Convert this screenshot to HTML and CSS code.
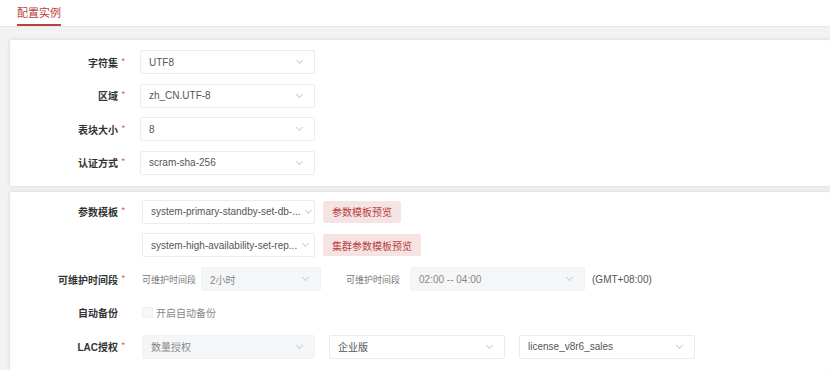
FILE: index.html
```html
<!DOCTYPE html>
<html lang="zh-CN">
  <head>
    <meta charset="UTF-8" />
    <meta name="viewport" content="width=device-width, initial-scale=1.0" />
    <title>配置实例</title>
    <link rel="stylesheet" href="styles.css">
  </head>
  <body>
    <div class="tabs">
      <span class="tab active">配置实例</span>
    </div>

    <div class="page">
      <div class="card">
        <div class="row">
          <label class="label required">字符集</label>
          <div class="select"><span>UTF8</span><i class="arrow"></i></div>
        </div>
        <div class="row">
          <label class="label required">区域</label>
          <div class="select"><span>zh_CN.UTF-8</span><i class="arrow"></i></div>
        </div>
        <div class="row">
          <label class="label required">表块大小</label>
          <div class="select"><span>8</span><i class="arrow"></i></div>
        </div>
        <div class="row">
          <label class="label required">认证方式</label>
          <div class="select"><span>scram-sha-256</span><i class="arrow"></i></div>
        </div>
      </div>

      <div class="card second">
        <div class="row">
          <label class="label required">参数模板</label>
          <div class="select"><span>system-primary-standby-set-db-...</span><i class="arrow"></i></div>
          <button class="btn-light">参数模板预览</button>
        </div>
        <div class="row">
          <label class="label"></label>
          <div class="select"><span>system-high-availability-set-rep...</span><i class="arrow"></i></div>
          <button class="btn-light">集群参数模板预览</button>
        </div>
        <div class="row">
          <label class="label required">可维护时间段</label>
          <span class="prefix">可维护时间段</span>
          <div class="select disabled narrow"><span>2小时</span><i class="arrow"></i></div>
          <span class="prefix far">可维护时间段</span>
          <div class="select disabled"><span>02:00 -- 04:00</span><i class="arrow"></i></div>
          <span class="suffix">(GMT+08:00)</span>
        </div>
        <div class="row">
          <label class="label">自动备份</label>
          <span class="checkbox"></span>
          <span class="check-text">开启自动备份</span>
        </div>
        <div class="row">
          <label class="label required">LAC授权</label>
          <div class="select disabled"><span>数量授权</span><i class="arrow"></i></div>
          <div class="select spaced"><span>企业版</span><i class="arrow"></i></div>
          <div class="select spaced"><span>license_v8r6_sales</span><i class="arrow"></i></div>
        </div>
      </div>
    </div>
  </body>
</html>
```
FILE: styles.css
```css
body {
  margin: 0;
  font-family: "Liberation Sans", "Noto Sans CJK SC", sans-serif;
  font-size: 10px;
  color: #555;
  background-color: #f2f2f2;
  height: 370px;
  overflow: hidden;
}

.tabs {
  height: 27px;
  background-color: #fff;
  border-bottom: 1px solid #e8e8e8;
  padding-left: 17px;
  box-sizing: border-box;
}
.tab {
  display: inline-block;
  height: 26px;
  line-height: 26px;
  color: #b8413d;
  font-size: 11px;
  box-sizing: border-box;
}
.tab.active {
  border-bottom: 2px solid #b8413d;
}

.page {
  padding: 13px 0 4px 10px;
}
.card {
  background-color: #fff;
  box-shadow: 0 0 4px rgba(0,0,0,0.12);
  padding: 10px 0 11px 0;
  margin-bottom: 6px;
  border-radius: 2px;
  display: flex;
  flex-direction: column;
  gap: 9.5px;
}
.card.second {
  padding: 8px 0 11px 0;
  gap: 9.75px;
}
.row {
  display: flex;
  align-items: center;
  height: 24px;
  white-space: nowrap;
}
.label {
  width: 108px;
  flex: none;
  text-align: right;
  font-weight: bold;
  color: #333;
  padding-right: 22px;
  position: relative;
}
.label.required::after {
  content: "*";
  color: #d9534f;
  font-weight: normal;
  font-size: 9px;
  position: absolute;
  right: 15px;
  top: 1px;
}

.select {
  flex: none;
  width: 175px;
  height: 24px;
  box-sizing: border-box;
  border: 1px solid #ececec;
  border-radius: 2px;
  background-color: #fff;
  display: flex;
  align-items: center;
  justify-content: space-between;
  padding: 0 12px 0 8px;
  color: #555;
}
.card.second .select {
  margin-left: 2px;
  width: 173px;
}
.card.second .select.disabled {
  background-color: #f5f6f7;
  border-color: #f3f3f3;
  color: #888;
}
.card.second .select.narrow {
  width: 120px;
  margin-left: 5px;
}
.card.second .prefix.far + .select {
  margin-left: 0;
  width: 175px;
}
.card.second .select.spaced {
  margin-left: 14px;
  width: 176px;
}
.arrow {
  flex: none;
  width: 4px;
  height: 4px;
  border-right: 1px solid #cfcfcf;
  border-bottom: 1px solid #cfcfcf;
  transform: rotate(45deg);
  margin-top: -3px;
  margin-left: 6px;
}

.btn-light {
  margin-left: 8px;
  height: 22px;
  border: none;
  border-radius: 2px;
  background-color: #f5e4e3;
  color: #b8413d;
  font-family: inherit;
  font-size: 10px;
  padding: 0 9px;
}

.prefix {
  color: #777;
  font-size: 9px;
  margin-left: 2px;
}
.prefix.far {
  margin-left: 25px;
  margin-right: 10px;
}
.suffix {
  margin-left: 7px;
  color: #555;
}

.checkbox {
  width: 9px;
  height: 9px;
  border: 1px solid #f0f0f0;
  background-color: #f7f7f7;
  margin-left: 2px;
}
.check-text {
  margin-left: 3px;
  color: #888;
}
```
